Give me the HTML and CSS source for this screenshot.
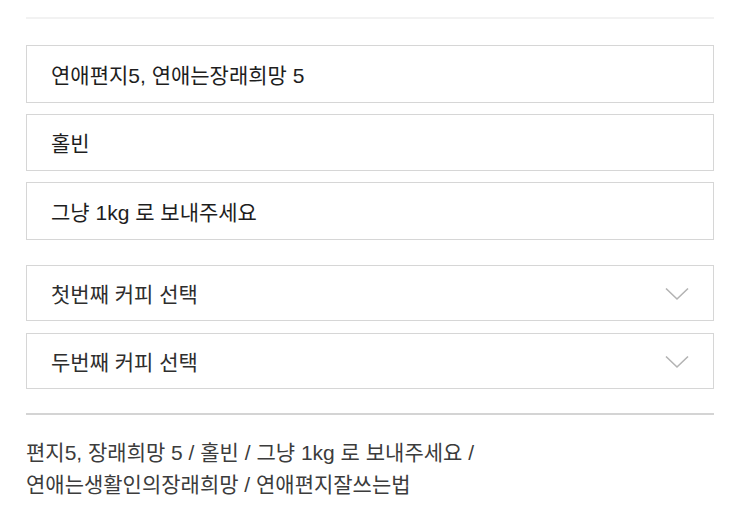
FILE: index.html
```html
<!DOCTYPE html>
<html lang="ko">
<head>
<meta charset="utf-8">
<link rel="stylesheet" href="styles.css">
</head>
<body>
<div class="page">
  <div class="topline"></div>
  <div class="fields">
    <div class="field">연애편지5, 연애는장래희망 5</div>
    <div class="field">홀빈</div>
    <div class="field">그냥 1kg 로 보내주세요</div>
  </div>
  <div class="selects">
    <div class="field select">
      <span>첫번째 커피 선택</span>
      <svg class="chev" width="24" height="14" viewBox="0 0 24 14"><path d="M1 1.5 L12 12 L23 1.5" fill="none" stroke="#b3b3b3" stroke-width="1.6"/></svg>
    </div>
    <div class="field select">
      <span>두번째 커피 선택</span>
      <svg class="chev" width="24" height="14" viewBox="0 0 24 14"><path d="M1 1.5 L12 12 L23 1.5" fill="none" stroke="#b3b3b3" stroke-width="1.6"/></svg>
    </div>
  </div>
  <div class="divider"></div>
  <p class="summary">편지5, 장래희망 5 / 홀빈 / 그냥 1kg 로 보내주세요 /<br>연애는생활인의장래희망 / 연애편지잘쓰는법</p>
</div>
</body>
</html>
```
FILE: styles.css
```css
html, body {
  margin: 0;
  padding: 0;
  background: #fff;
}
.page {
  padding: 17px 24px 0 26px;
  font-family: "Liberation Sans", "Noto Sans CJK KR", sans-serif;
  color: #1e1e1e;
}
.topline {
  height: 2px;
  background: #f2f2f2;
}
.fields {
  margin-top: 26px;
  display: flex;
  flex-direction: column;
  gap: 11px;
}
.selects {
  margin-top: 25.5px;
  display: flex;
  flex-direction: column;
  gap: 12px;
}
.field {
  box-sizing: border-box;
  height: 57.5px;
  border: 1px solid #d6d6d6;
  padding: 0 24px 0 24px;
  display: flex;
  align-items: center;
  font-size: 21px;
}
.select {
  height: 56px;
  justify-content: space-between;
  color: #2e2e2e;
}
.chev {
  display: block;
  margin-top: 2px;
}
.divider {
  margin-top: 24px;
  height: 2px;
  background: #d4d4d4;
}
.summary {
  margin: 22px 0 0 0;
  font-size: 21px;
  line-height: 32px;
  color: #3c3c3c;
}
```
